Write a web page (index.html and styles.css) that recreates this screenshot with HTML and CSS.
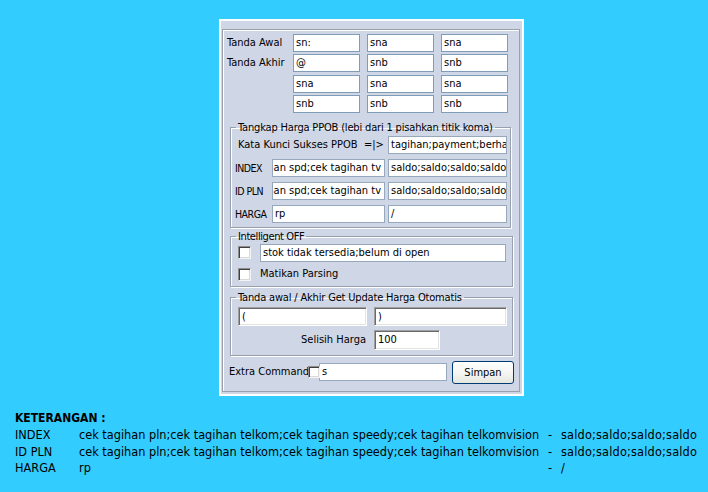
FILE: index.html
```html
<!DOCTYPE html>
<html>
<head>
<meta charset="utf-8">
<link rel="stylesheet" href="styles.css">
</head>
<body>
<div class="panel">
  <div class="frame">
    <div class="marks">
      <span class="lbl">Tanda Awal</span><div class="tb">sn:</div><div class="tb">sna</div><div class="tb">sna</div>
      <span class="lbl">Tanda Akhir</span><div class="tb">@</div><div class="tb">snb</div><div class="tb">snb</div>
      <span></span><div class="tb">sna</div><div class="tb">sna</div><div class="tb">sna</div>
      <span></span><div class="tb">snb</div><div class="tb">snb</div><div class="tb">snb</div>
    </div>

    <fieldset class="grp g1">
      <legend>Tangkap Harga PPOB (lebi dari 1 pisahkan titik koma)</legend>
      <div class="ppob">
        <span class="lbl kata">Kata Kunci Sukses PPOB &nbsp;=|&gt;</span><div class="tb tb2">tagihan;payment;berhasil</div>
        <span class="lbl cap">INDEX</span><div class="tb tb2 end">cek tagihan pln;cek tagihan telkom;cek tagihan spd;cek tagihan tv</div><div class="tb tb2">saldo;saldo;saldo;saldo</div>
        <span class="lbl cap">ID PLN</span><div class="tb tb2 end">cek tagihan pln;cek tagihan telkom;cek tagihan spd;cek tagihan tv</div><div class="tb tb2">saldo;saldo;saldo;saldo</div>
        <span class="lbl cap">HARGA</span><div class="tb tb2">rp</div><div class="tb tb2">/</div>
      </div>
    </fieldset>

    <fieldset class="grp g2">
      <legend class="short">Intelligent OFF</legend>
      <div class="row">
        <span class="chk"></span><div class="tb tb2 stok">stok tidak tersedia;belum di open</div>
      </div>
      <div class="row r2">
        <span class="chk"></span><span class="lbl">Matikan Parsing</span>
      </div>
    </fieldset>

    <fieldset class="grp g3">
      <legend>Tanda awal / Akhir Get Update Harga Otomatis</legend>
      <div class="row">
        <div class="tb3d open">(</div><div class="tb3d close">)</div>
      </div>
      <div class="row r3">
        <span class="lbl selisih">Selisih Harga</span><div class="tb3d num">100</div>
      </div>
    </fieldset>

    <div class="extra">
      <span class="lbl xlbl">Extra Command</span><span class="chk small"></span><div class="tb tb2 xcmd">s</div><button class="btn">Simpan</button>
    </div>
  </div>
</div>

<div class="notes">
  <div class="head">KETERANGAN :</div>
  <div class="ntab">
    <span>INDEX</span><span>cek tagihan pln;cek tagihan telkom;cek tagihan speedy;cek tagihan telkomvision</span><span>-</span><span class="val">saldo;saldo;saldo;saldo</span>
    <span>ID PLN</span><span>cek tagihan pln;cek tagihan telkom;cek tagihan speedy;cek tagihan telkomvision</span><span>-</span><span class="val">saldo;saldo;saldo;saldo</span>
    <span>HARGA</span><span>rp</span><span>-</span><span class="val">/</span>
  </div>
</div>
</body>
</html>
```

FILE: styles.css
```css
* { box-sizing: border-box; }

body {
  margin: 0;
  width: 708px;
  height: 492px;
  overflow: hidden;
  background: #33ccff;
  font-family: "DejaVu Sans Condensed", "DejaVu Sans", "Liberation Sans", sans-serif;
  font-stretch: condensed;
  font-size: 11px;
  color: #000;
}

.panel {
  margin: 19px 0 0 219px;
  width: 305px;
  height: 377px;
  border: 2px solid #fff;
  background: #cfd6e5;
  padding: 8px 0 0 1px;
}

.frame {
  width: 298px;
  height: 363px;
  border: 1px solid #98a0ad;
  box-shadow: inset 1px 1px 0 #fff;
  padding: 4px 0 0 4px;
}

.lbl { white-space: nowrap; line-height: 18px; }

.marks {
  display: grid;
  grid-template-columns: 59px 67px 67px 67px;
  grid-auto-rows: 18px;
  column-gap: 7px;
  row-gap: 2.33px;
  width: 280px;
}

.tb {
  height: 18px;
  background: #fff;
  border: 1px solid #7f9db9;
  padding: 0 2px;
  line-height: 16px;
  white-space: nowrap;
  overflow: hidden;
}

.tb2 { border-color: #98a8bc; }

.tb.end { direction: rtl; text-align: right; padding-right: 3px; }

.grp {
  margin: 0;
  border: 1px solid #97a0ae;
  box-shadow: inset 1px 1px 0 #fff, 1px 1px 0 #fff;
  min-width: 0;
}

.grp legend {
  font-size: 11px;
  line-height: 13px;
  padding: 0 2px;
  white-space: nowrap;
  letter-spacing: -0.17px;
}
.grp legend.short { letter-spacing: -0.4px; }

.g1 {
  margin: 8.5px 0 0 3px;
  width: 281px;
  padding: 1.5px 3px 4px 4px;
}
.g1 legend { margin-left: 1px; }

.ppob {
  display: grid;
  grid-template-columns: 34px 113px 119px;
  grid-auto-rows: 18px;
  column-gap: 3px;
  row-gap: 5px;
}
.ppob .kata { grid-column: 1 / 3; padding-left: 3px; }
.ppob .cap { letter-spacing: -0.5px; font-size: 10.5px; }

.g2 {
  margin: 2.5px 0 0 3px;
  width: 283px;
  padding: 0.5px 3px 5px 7px;
}
.g2 legend, .g3 legend { margin-left: -2px; }

.row { display: flex; align-items: center; }
.r2 { margin-top: 6px; height: 13px; }
.r2 .lbl { margin-left: 9px; }

.chk {
  flex: none;
  width: 13px;
  height: 13px;
  background: #fff;
  border: 1px solid;
  border-color: #8d8d8d #f4f4f4 #f4f4f4 #8d8d8d;
  box-shadow: inset 1px 1px 0 #404040, inset -1px -1px 0 #d8d8d8;
}

.stok { margin-left: 9px; width: 246px; }

.g3 {
  margin: 4.5px 0 0 3px;
  width: 283px;
  padding: 2.5px 3px 5px 7px;
}

.tb3d {
  background: #fff;
  border: 1px solid;
  border-color: #a0a0a0 #ffffff #ffffff #a0a0a0;
  box-shadow: inset 1px 1px 0 #696969, inset -1px -1px 0 #e3e3e3;
  padding: 0 3px;
  line-height: 17px;
  white-space: nowrap;
  overflow: hidden;
}
.open { width: 129px; height: 19px; }
.close { width: 133px; height: 19px; margin-left: 7px; }
.r3 { margin-top: 4px; }
.selisih { width: 129px; text-align: right; padding-right: 1px; }
.num { width: 66px; height: 20px; margin-left: 7px; line-height: 18px; }

.extra {
  display: flex;
  align-items: center;
  margin-top: 5px;
  padding-left: 2px;
  height: 23px;
}
.xlbl { width: 79px; }
.chk.small { width: 12px; height: 12px; position: relative; z-index: 1; }
.xcmd { width: 128px; margin-left: -1px; }
.btn {
  margin-left: 5px;
  width: 62px;
  height: 23px;
  border: 1px solid #003c74;
  border-radius: 3px;
  background: linear-gradient(#ffffff, #f3f3ef 60%, #e6e6e0);
  font-family: inherit;
  font-stretch: condensed;
  font-size: 11px;
  color: #000;
  padding: 0;
}

.notes {
  margin-top: 14px;
  padding-left: 15px;
  font-size: 12.6px;
  line-height: 16.7px;
}
.notes .head { font-weight: bold; font-size: 12px; line-height: 17px; }
.ntab {
  display: grid;
  grid-template-columns: 64px 469px 13px auto;
}
.ntab span { white-space: nowrap; }
.ntab .val { letter-spacing: 0.18px; }
```
